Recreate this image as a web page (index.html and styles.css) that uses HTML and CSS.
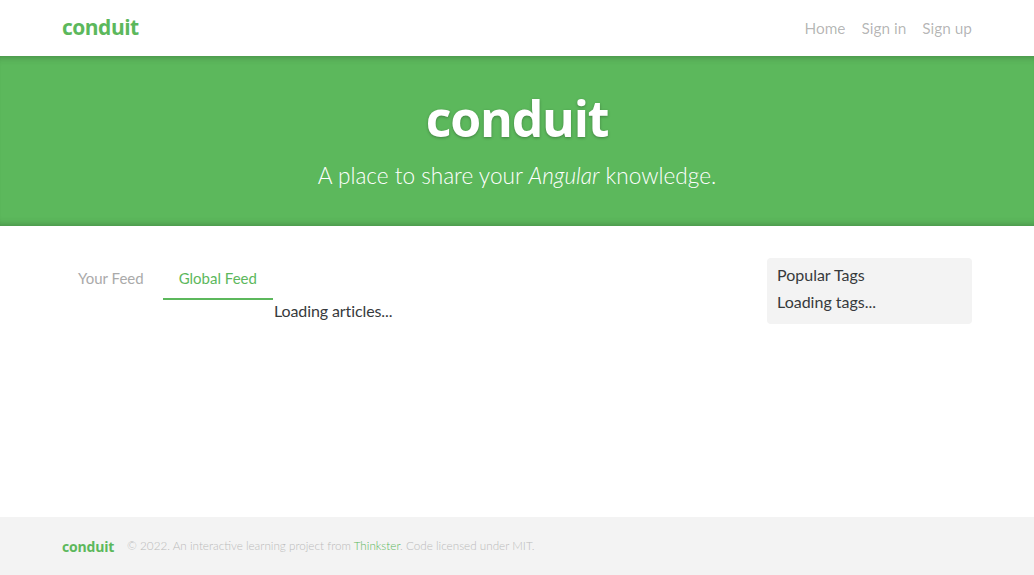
FILE: index.html
```html
<!DOCTYPE html>
<html lang="en">
<head>
<meta charset="utf-8">
<title>Conduit</title>
<link rel="stylesheet" href="styles.css">
</head>
<body>
<nav class="navbar">
  <div class="container navbar-inner">
    <a class="brand" href="#">conduit</a>
    <ul class="nav-links">
      <li><a href="#">Home</a></li>
      <li><a href="#">Sign in</a></li>
      <li><a href="#">Sign up</a></li>
    </ul>
  </div>
</nav>
<section class="banner">
  <h1 class="banner-title">conduit</h1>
  <p class="banner-sub">A place to share your <i>Angular</i> knowledge.</p>
</section>
<main class="container page">
  <div class="main-col">
    <ul class="feed-toggle">
      <li class="tab">Your Feed</li>
      <li class="tab active">Global Feed</li>
    </ul>
    <div class="loading-articles">Loading articles...</div>
  </div>
  <aside class="side-col">
    <div class="sidebar">
      <p class="sidebar-title">Popular Tags</p>
      <div class="sidebar-loading">Loading tags...</div>
    </div>
  </aside>
</main>
<footer class="footer">
  <div class="container footer-inner">
    <a class="footer-logo" href="#">conduit</a>
    <span class="attribution">© 2022. An interactive learning project from <a href="#">Thinkster</a>. Code licensed under MIT.</span>
  </div>
</footer>
</body>
</html>
```
FILE: styles.css
```css
* { box-sizing: border-box; }
html, body { margin: 0; padding: 0; height: 100%; }
body {
  font-family: "Lato", "Noto Sans", sans-serif;
  font-size: 16px;
  line-height: 1.5;
  color: #373a3c;
  background: #fff;
  position: relative;
  min-height: 575px;
}
a { text-decoration: none; }
ul { list-style: none; margin: 0; padding: 0; }
.container { width: 940px; margin: 0 auto; padding: 0 15px; }

.navbar { height: 56px; }
.navbar-inner { display: flex; align-items: center; justify-content: space-between; height: 56px; }
.brand {
  font-family: "Open Sans", sans-serif;
  font-weight: 700;
  font-size: 21px;
  color: #5cb85c;
  letter-spacing: -0.5px;
  line-height: 1;
  margin-top: -2px;
}
.nav-links { display: flex; gap: 16px; }
.nav-links a { color: rgba(0,0,0,.3); font-size: 15.4px; }

.banner {
  background: #5cb85c;
  height: 170px;
  padding-top: 23px;
  text-align: center;
  color: #fff;
  box-shadow: inset 0 8px 8px -8px rgba(0,0,0,.3), inset 0 -8px 8px -8px rgba(0,0,0,.3);
}
.banner-title {
  margin: 0;
  font-family: "Open Sans", sans-serif;
  font-weight: 700;
  font-size: 50px;
  line-height: 78px;
  letter-spacing: -1.2px;
  text-shadow: 0 1px 3px rgba(0,0,0,.3);
}
.banner-sub {
  margin: 2px 0 0;
  font-size: 22.6px;
  font-weight: 300;
  line-height: 34px;
}

.page { display: flex; padding-top: 32px; }
.main-col { width: 705px; }
.side-col { width: 205px; }
.feed-toggle { display: flex; }
.tab {
  padding: 8px 16px 8px;
  font-size: 15px;
  color: #aaa;
  border-bottom: 2px solid transparent;
  line-height: 24px;
}
.tab + .tab { margin-left: 3px; }
.tab.active { color: #5cb85c; border-bottom-color: #5cb85c; }
.loading-articles { padding-left: 212px; letter-spacing: -0.1px; margin-top: -1px; }

.sidebar {
  background: #f3f3f3;
  padding: 5px 10px 10px;
  border-radius: 4px;
}
.sidebar-title { margin: 0 0 3px; }

.footer {
  position: absolute;
  bottom: 0;
  left: 0;
  right: 0;
  background: #f3f3f3;
  height: 58px;
}
.footer-inner { display: flex; align-items: center; height: 58px; }
.footer-logo {
  font-family: "Open Sans", sans-serif;
  font-weight: 700;
  font-size: 14px;
  color: #5cb85c;
  margin-right: 13px;
  letter-spacing: -0.2px;
}
.attribution { color: #bbb; font-size: 11.7px; font-weight: 300; }
.attribution a { color: #5cb85c; }
```
